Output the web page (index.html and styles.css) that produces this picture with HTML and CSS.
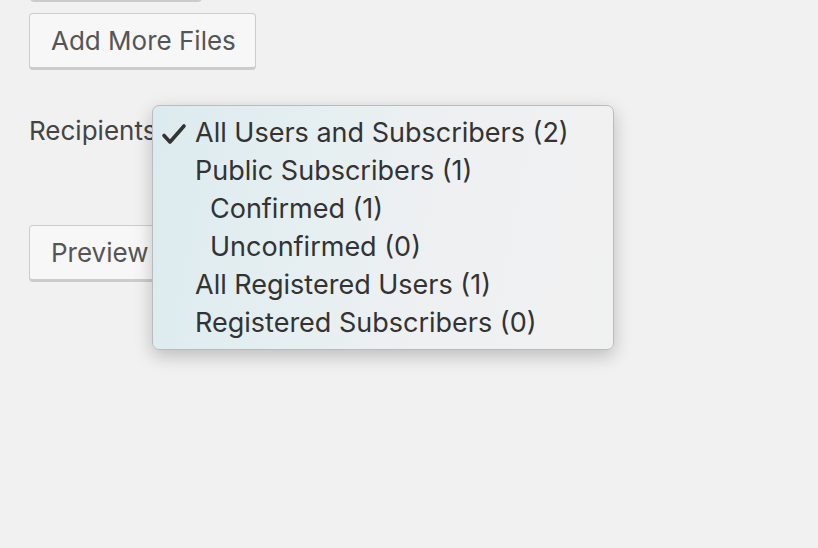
FILE: index.html
```html
<!DOCTYPE html>
<html>
<head>
<meta charset="utf-8">
<link rel="stylesheet" href="styles.css">
</head>
<body>
<div class="page">
  <div class="btn btn-top"></div>
  <div class="btn btn-add">Add More Files</div>
  <div class="recip-row">
    <span class="label">Recipients</span>
  </div>
  <div class="btn btn-preview">Preview</div>
</div>
<div class="menu">
  <div class="item checked"><svg class="check" width="26" height="22" viewBox="0 0 26 22"><path d="M3 12.5 L9 19 L23 3" fill="none" stroke="#333" stroke-width="3.6" stroke-linecap="round" stroke-linejoin="round"/></svg>All Users and Subscribers (2)</div>
  <div class="item">Public Subscribers (1)</div>
  <div class="item sub">Confirmed (1)</div>
  <div class="item sub">Unconfirmed (0)</div>
  <div class="item">All Registered Users (1)</div>
  <div class="item">Registered Subscribers (0)</div>
</div>
</body>
</html>
```

FILE: styles.css
```css
html, body {
  margin: 0;
  padding: 0;
  background: #f1f1f1;
  width: 818px;
  height: 548px;
  overflow: hidden;
  font-family: "Inter", "Liberation Sans", sans-serif;
  color: #444;
}
.page {
  padding-left: 29px;
  display: flex;
  flex-direction: column;
  align-items: flex-start;
  position: relative;
  top: -20px;
}
.btn {
  box-sizing: border-box;
  background: #f7f7f7;
  border: 1px solid #cccccc;
  border-bottom-width: 3px;
  border-radius: 4px;
  font-size: 26px;
  height: 57px;
  display: flex;
  align-items: center;
  padding: 0 0 0 21px;
  color: #555;
  white-space: nowrap;
}
.btn-top {
  width: 172px;
  height: 22px;
  margin-left: 1px;
}
.btn-add {
  margin-top: 11px;
  width: 227px;
}
.recip-row {
  margin-top: 38px;
  height: 44px;
  display: flex;
  align-items: center;
  font-size: 26px;
  color: #444;
}
.btn-preview {
  margin-top: 73px;
  width: 150px;
}
.menu {
  position: absolute;
  left: 152px;
  top: 105px;
  width: 462px;
  height: 245px;
  box-sizing: border-box;
  border: 1px solid #b9bcbf;
  border-radius: 7px;
  background: linear-gradient(100deg, #dcebef 0%, #e6eff1 35%, #eef0f1 60%, #f1f1f1 100%);
  box-shadow: 0 6px 18px rgba(0,0,0,0.22);
  padding-top: 8px;
  font-size: 27px;
  color: #333;
}
.item {
  height: 38px;
  line-height: 38px;
  padding-left: 42px;
  position: relative;
  white-space: nowrap;
}
.item.sub { padding-left: 57px; }
.check {
  position: absolute;
  left: 8px;
  top: 9px;
}
```
